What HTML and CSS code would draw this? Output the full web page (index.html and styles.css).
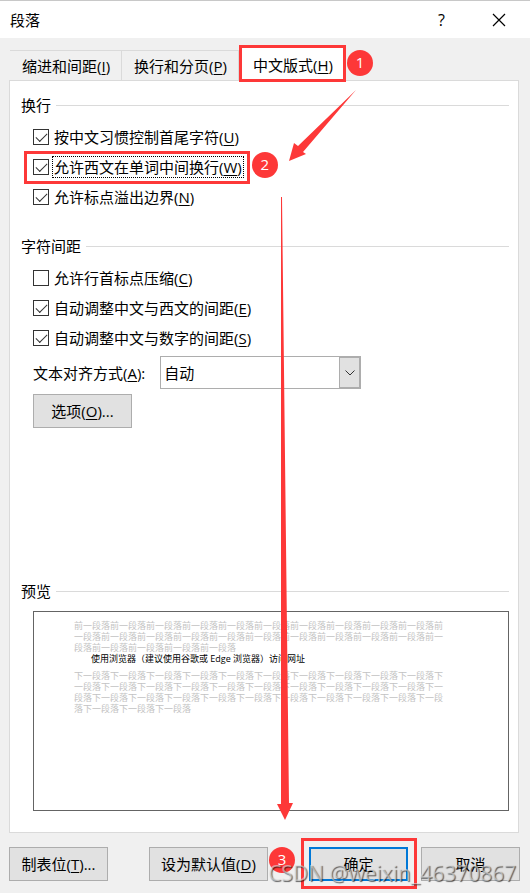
FILE: index.html
```
<!DOCTYPE html>
<html lang="zh-CN">
<head>
    <meta charset="UTF-8">
    <meta name="viewport" content="width=device-width, initial-scale=1.0">
    <title>段落</title>
    <link rel="stylesheet" href="styles.css">
</head>
<body>
    <div class="dialog">
        <header class="title-bar">
            <h1>段落</h1>
            <button type="button" class="title-btn" aria-label="帮助">?</button>
            <button type="button" class="title-btn close" aria-label="关闭">
                <svg width="14" height="14" viewBox="0 0 14 14"><path d="M1 1L13 13M13 1L1 13" fill="none" stroke="#000" stroke-width="1.2"/></svg>
            </button>
        </header>

        <nav class="tabs">
            <button type="button" class="tab">缩进和间距(<u>I</u>)</button>
            <button type="button" class="tab">换行和分页(<u>P</u>)</button>
            <button type="button" class="tab active marked">中文版式(<u>H</u>)<span class="step">1</span></button>
        </nav>

        <main class="panel">
            <section class="group">
                <h2>换行</h2>
                <div class="options">
                    <div class="check">
                        <input type="checkbox" id="kinsoku" checked>
                        <label for="kinsoku">按中文习惯控制首尾字符(<u>U</u>)</label>
                    </div>
                    <div class="check marked">
                        <input type="checkbox" id="wordBreak" checked>
                        <label for="wordBreak" class="focused">允许西文在单词中间换行(<u>W</u>)</label>
                        <span class="step">2</span>
                    </div>
                    <div class="check">
                        <input type="checkbox" id="overflow" checked>
                        <label for="overflow">允许标点溢出边界(<u>N</u>)</label>
                    </div>
                </div>
            </section>

            <section class="group">
                <h2>字符间距</h2>
                <div class="options">
                    <div class="check">
                        <input type="checkbox" id="compress">
                        <label for="compress">允许行首标点压缩(<u>C</u>)</label>
                    </div>
                    <div class="check">
                        <input type="checkbox" id="latinSpace" checked>
                        <label for="latinSpace">自动调整中文与西文的间距(<u>E</u>)</label>
                    </div>
                    <div class="check">
                        <input type="checkbox" id="numberSpace" checked>
                        <label for="numberSpace">自动调整中文与数字的间距(<u>S</u>)</label>
                    </div>
                </div>
                <div class="align-row">
                    <label for="align">文本对齐方式(<u>A</u>):</label>
                    <div class="select-box">
                        <select id="align">
                            <option>自动</option>
                        </select>
                        <span class="select-arrow">
                            <svg width="10" height="6" viewBox="0 0 10 6"><path d="M0.5 0.5L5 5L9.5 0.5" fill="none" stroke="#333" stroke-width="1"/></svg>
                        </span>
                    </div>
                </div>
                <button type="button" class="btn options-btn">选项(<u>O</u>)...</button>
            </section>

            <section class="group preview">
                <h2>预览</h2>
                <div class="preview-box">
                    <p>前一段落前一段落前一段落前一段落前一段落前一段落前一段落前一段落前一段落前一段落前一段落前一段落前一段落前一段落前一段落前一段落前一段落前一段落前一段落前一段落前一段落前一段落前一段落前一段落前一段落</p>
                    <p class="current">使用浏览器（建议使用谷歌或 Edge 浏览器）访问网址</p>
                    <p>下一段落下一段落下一段落下一段落下一段落下一段落下一段落下一段落下一段落下一段落下一段落下一段落下一段落下一段落下一段落下一段落下一段落下一段落下一段落下一段落下一段落下一段落下一段落下一段落下一段落下一段落下一段落下一段落下一段落下一段落下一段落下一段落下一段落下一段落</p>
                </div>
            </section>
        </main>

        <footer class="buttons">
            <button type="button" class="btn">制表位(<u>T</u>)...</button>
            <button type="button" class="btn wide">设为默认值(<u>D</u>)</button>
            <div class="confirm">
                <div class="marked">
                    <button type="button" class="btn primary">确定</button>
                    <span class="step">3</span>
                </div>
                <button type="button" class="btn">取消</button>
            </div>
        </footer>

        <svg class="arrows" width="530" height="893" viewBox="0 0 530 893">
            <path d="M356 90L303 152L306 154L289 161L294 143L298 146Z" fill="#fd3838"/>
            <path d="M281 197L282 197L289 803L293 803L285 820L277 804L281 804Z" fill="#fd3838"/>
        </svg>
        <div class="watermark">CSDN @weixin_46370867</div>
    </div>
</body>
</html>
```
FILE: styles.css
```
* {
    margin: 0;
    padding: 0;
    box-sizing: border-box;
}

body {
    font-family: "Open Sans", "Noto Sans CJK SC", sans-serif;
    font-size: 15px;
    line-height: 20px;
    color: #000;
    background: #f0f0f0;
}

button,
select {
    font: inherit;
    color: inherit;
}

u {
    text-underline-offset: 2px;
}

.dialog {
    position: relative;
    display: flex;
    flex-direction: column;
    min-height: 100vh;
    padding-bottom: 12px;
    border: 1px solid #c8c8c8;
    border-width: 1px 0 0 0;
}

/* Title bar */
.title-bar {
    display: flex;
    align-items: center;
    height: 37px;
    padding: 0 3px 0 10px;
    background: #fff;
}

.title-bar h1 {
    flex: 1;
    font-size: 15px;
    font-weight: normal;
}

.title-btn {
    width: 57px;
    height: 36px;
    border: none;
    background: none;
    font-size: 16px;
}

.close svg {
    display: block;
    margin: auto;
}

/* Tabs */
.tabs {
    display: flex;
    align-items: flex-end;
    height: 43px;
    padding-left: 10px;
}

.tab {
    height: 31px;
    padding: 0 11px 0 12px;
    border: 1px solid #dadada;
    border-width: 1px 1px 0 0;
    background: none;
    white-space: nowrap;
}

.tab.active {
    z-index: 1;
    height: 33px;
    padding: 0 13px 0 14px;
    border: none;
    background: #fff;
}

/* Panel */
.panel {
    flex: 1;
    display: flex;
    flex-direction: column;
    margin: -1px 11px 0 9px;
    padding: 14px 9px 21px 11px;
    border: 1px solid #dadada;
    background: #fff;
}

.group h2 {
    display: flex;
    align-items: center;
    gap: 5px;
    font-size: 15px;
    font-weight: normal;
}

.group h2::after {
    content: "";
    flex: 1;
    height: 1px;
    background: #dadada;
}

.options {
    display: flex;
    flex-direction: column;
    align-items: flex-start;
    gap: 6px;
    padding: 10px 0 0 12px;
}

.group + .group {
    margin-top: 27px;
}

.check {
    display: flex;
    align-items: center;
    gap: 3px;
    height: 24px;
}

.check input {
    appearance: none;
    width: 16px;
    height: 16px;
    border: 1px solid #333;
    background: #fff;
}

.check input:checked::before {
    content: "";
    display: block;
    width: 10px;
    height: 5px;
    margin: 3px 2px;
    border: solid #333;
    border-width: 0 0 1px 1px;
    transform: rotate(-45deg);
}

.check label {
    padding: 0 1px;
    border: 1px solid transparent;
    white-space: nowrap;
}

.check label.focused {
    border: 1px dotted #000;
}

.align-row {
    display: flex;
    align-items: center;
    gap: 15px;
    padding: 6px 0 0 12px;
}

.select-box {
    position: relative;
    width: 201px;
}

.select-box select {
    appearance: none;
    display: block;
    width: 100%;
    height: 33px;
    padding: 0 24px 0 3px;
    border: 1px solid #adadad;
    border-radius: 0;
    background: #fff;
}

.select-arrow {
    position: absolute;
    top: 0;
    right: 0;
    display: flex;
    align-items: center;
    justify-content: center;
    width: 22px;
    height: 33px;
    border: 1px solid #adadad;
    border-width: 2px 2px 2px 1px;
    background: #e1e1e1;
    pointer-events: none;
}

.btn {
    min-width: 99px;
    height: 34px;
    border: 1px solid #adadad;
    background: #e1e1e1;
    white-space: nowrap;
}

.btn.wide {
    min-width: 119px;
}

.btn.primary {
    border: 2px solid #0078d7;
}

.options-btn {
    display: block;
    margin: 5px 0 0 12px;
}

/* Preview */
.panel .preview {
    margin-top: auto;
}

.preview-box {
    height: 200px;
    margin: 10px 0 0 12px;
    padding: 8px 64px 0 40px;
    border: 1px solid #646464;
    font-size: 9px;
    line-height: 11px;
    color: #c3c3c3;
}

.preview-box .current {
    margin-bottom: 6px;
    padding-left: 17px;
    color: #000;
}

/* Footer */
.buttons {
    display: flex;
    justify-content: space-between;
    padding: 14px 10px 0 9px;
}

.confirm {
    display: flex;
    gap: 13px;
}

/* Step markers */
.marked {
    position: relative;
}

.marked::before {
    content: "";
    position: absolute;
    inset: -4px -6px -5px -9px;
    border: 3px solid #fd3838;
    pointer-events: none;
}

.tab.marked::before {
    inset: -3px 0 -1px 0;
}

.confirm .marked::before {
    inset: -9px -9px -8px -8px;
}

.step {
    position: absolute;
    top: -3px;
    right: -34px;
    width: 26px;
    height: 26px;
    border-radius: 50%;
    background: #fd3838;
    color: #fff;
    line-height: 24px;
    text-align: center;
}

.tab .step {
    top: 2px;
    right: -27px;
}

.confirm .step {
    top: 0;
    right: auto;
    left: -40px;
}

.arrows {
    position: absolute;
    top: -1px;
    left: 0;
    pointer-events: none;
}

.watermark {
    position: absolute;
    right: 14px;
    bottom: 6px;
    font-family: "Open Sans", sans-serif;
    font-size: 21px;
    line-height: 28px;
    color: rgba(225, 225, 225, 0.6);
    text-shadow: 1px 1px 1px rgba(0, 0, 0, 0.6);
    white-space: nowrap;
    pointer-events: none;
}
```
